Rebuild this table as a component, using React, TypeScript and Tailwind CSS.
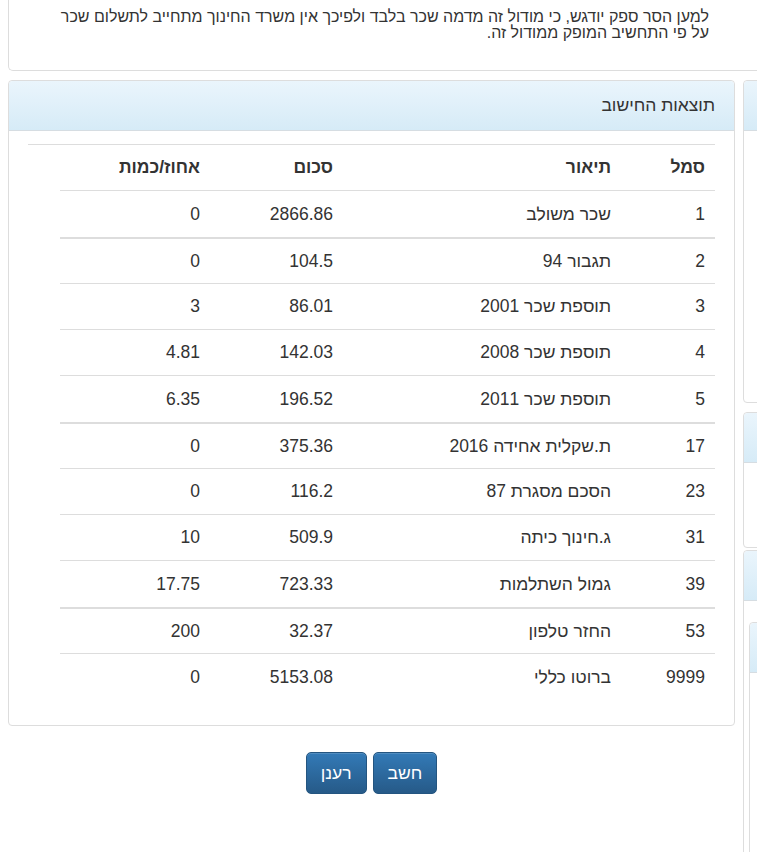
import React from 'react';

type Row = { code: string; desc: string; sum: string; pct: string; cls: string };

const rows: Row[] = [
    { code: '1', desc: 'שכר משולב', sum: '2866.86', pct: '0', cls: 'h-[48px] border-b-2' },
    { code: '2', desc: 'תגבור 94', sum: '104.5', pct: '0', cls: 'h-[45px] border-b' },
    { code: '3', desc: 'תוספת שכר 2001', sum: '86.01', pct: '3', cls: 'h-[46px] border-b' },
    { code: '4', desc: 'תוספת שכר 2008', sum: '142.03', pct: '4.81', cls: 'h-[46px] border-b' },
    { code: '5', desc: 'תוספת שכר 2011', sum: '196.52', pct: '6.35', cls: 'h-[48px] border-b-2' },
    { code: '17', desc: 'ת.שקלית אחידה 2016', sum: '375.36', pct: '0', cls: 'h-[45px] border-b' },
    { code: '23', desc: 'הסכם מסגרת 87', sum: '116.2', pct: '0', cls: 'h-[46px] border-b' },
    { code: '31', desc: 'ג.חינוך כיתה', sum: '509.9', pct: '10', cls: 'h-[46px] border-b' },
    { code: '39', desc: 'גמול השתלמות', sum: '723.33', pct: '17.75', cls: 'h-[48px] border-b-2' },
    { code: '53', desc: 'החזר טלפון', sum: '32.37', pct: '200', cls: 'h-[45px] border-b' },
    { code: '9999', desc: 'ברוטו כללי', sum: '5153.08', pct: '0', cls: 'h-[46px]' },
];

function Heading({ title }: { title?: string }) {
    return (
        <div className="h-[50px] border-b border-[#d6dde2] bg-gradient-to-b from-[#eaf5fc] to-[#d6ebf7] rounded-t-[4px] flex items-center justify-end pr-[19px]">
            {title && <span dir="rtl">{title}</span>}
        </div>
    );
}

export default function App() {
    return (
        <div className="w-[757px] h-[852px] overflow-hidden bg-white text-[#333] font-['Liberation_Sans',Arial,sans-serif] text-[17.5px]">
            {/* notice panel, scrolled partly out of view */}
            <div className="ml-[8px] w-[800px] h-[71px] border-l border-b border-[#ddd] rounded-bl-[5px]">
                <p dir="rtl" className="w-[700px] pl-[42px] pt-[9px] text-[16px] leading-[16px]">
                    למען הסר ספק יודגש, כי מודול זה מדמה שכר בלבד ולפיכך אין משרד החינוך מתחייב לתשלום שכר על פי התחשיב המופק ממודול זה.
                </p>
            </div>

            <div className="flex mt-[9px] ml-[8px] gap-[8px]">
                <div className="w-[727px] shrink-0">
                    <div className="border border-[#ddd] rounded-[4px]">
                        <Heading title="תוצאות החישוב" />
                        <div className="pt-[13px] px-[19px] pb-[25px]">
                            <div className="border-t border-[#ddd]">
                                <div
                                    dir="rtl"
                                    className="ml-[32px] h-[46px] border-b border-[#ddd] grid grid-cols-[94px_278px_133px_150px] items-center font-bold"
                                >
                                    <div className="pr-[10px]">סמל</div>
                                    <div className="pr-[10px]">תיאור</div>
                                    <div className="pr-[10px]">סכום</div>
                                    <div className="pr-[10px]">אחוז/כמות</div>
                                </div>
                                {rows.map((r) => (
                                    <div
                                        key={r.code}
                                        dir="rtl"
                                        className={`ml-[32px] border-[#ddd] grid grid-cols-[94px_278px_133px_150px] items-center ${r.cls}`}
                                    >
                                        <div className="pr-[10px]">{r.code}</div>
                                        <div className="pr-[10px]">{r.desc}</div>
                                        <div className="pr-[10px]">{r.sum}</div>
                                        <div className="pr-[10px]">{r.pct}</div>
                                    </div>
                                ))}
                            </div>
                        </div>
                    </div>

                    <div dir="rtl" className="flex justify-center gap-[6px] mt-[26px]">
                        <button className="h-[42px] px-[14px] rounded-[5px] border border-[#245580] bg-gradient-to-b from-[#337ab7] to-[#265a88] text-white shadow-[inset_0_1px_0_rgba(255,255,255,0.15)]">
                            חשב
                        </button>
                        <button className="h-[42px] px-[14px] rounded-[5px] border border-[#245580] bg-gradient-to-b from-[#337ab7] to-[#265a88] text-white shadow-[inset_0_1px_0_rgba(255,255,255,0.15)]">
                            רענן
                        </button>
                    </div>
                </div>

                {/* side column, mostly off screen */}
                <div className="w-[260px] shrink-0 flex flex-col">
                    <div className="h-[323px] border border-[#ddd] rounded-[4px]">
                        <Heading />
                    </div>
                    <div className="mt-[9px] h-[136px] border border-[#ddd] rounded-[4px]">
                        <Heading />
                    </div>
                    <div className="mt-[2px] h-[320px] border border-[#ddd] rounded-[4px]">
                        <Heading />
                        <div className="pt-[21px] pl-[5px]">
                            <div className="h-[260px] border border-[#ddd] rounded-[4px]">
                                <Heading />
                            </div>
                        </div>
                    </div>
                </div>
            </div>
        </div>
    );
}
